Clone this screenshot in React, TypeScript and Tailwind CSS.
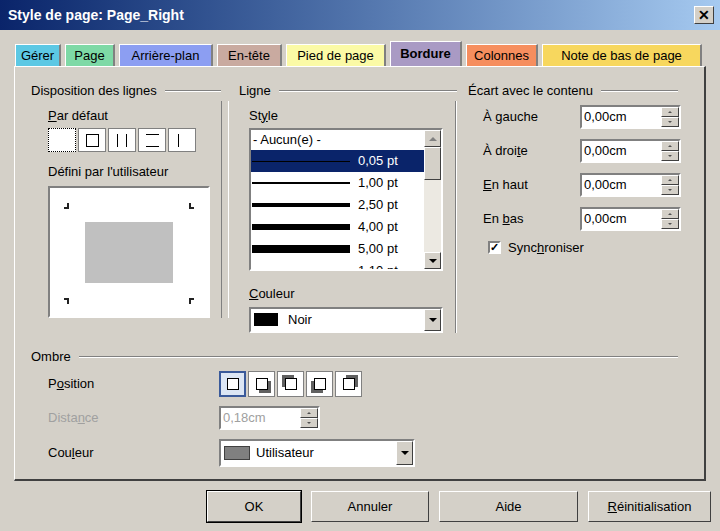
import React from "react";

const sunken = "border-t-[#808080] border-l-[#808080] border-b-white border-r-white border-2";
const raised = "border border-t-white border-l-white border-b-[#404040] border-r-[#404040]";

function Spin({ value, disabled }: { value: string; disabled?: boolean }) {
  return (
    <div className={`flex h-[24px] w-[101px] bg-white ${sunken} ${disabled ? "bg-[#ece9e2]" : ""}`}>
      <div className={`flex-1 pl-[2px] leading-[20px] ${disabled ? "text-[#a0a0a0]" : ""}`}>{value}</div>
      <div className="flex w-[18px] flex-col">
        <div className={`flex flex-1 items-center justify-center bg-[#d4d0c8] ${raised}`}>
          <div className="h-0 w-0 border-x-[2px] border-b-[2px] border-x-transparent border-b-[#505050]" />
        </div>
        <div className={`flex flex-1 items-center justify-center bg-[#d4d0c8] ${raised}`}>
          <div className="h-0 w-0 border-x-[2px] border-t-[2px] border-x-transparent border-t-[#505050]" />
        </div>
      </div>
    </div>
  );
}

function DownBtn() {
  return (
    <div className={`flex w-[17px] items-center justify-center bg-[#d4d0c8] ${raised}`}>
      <div className="h-0 w-0 border-x-[4px] border-t-[4px] border-x-transparent border-t-black" />
    </div>
  );
}

function Group({ title, className }: { title: string; className?: string }) {
  return (
    <div className={`flex items-center gap-2 ${className ?? ""}`}>
      <span>{title}</span>
      <div className="h-0 flex-1 border-t border-t-[#808080] border-b border-b-white" />
    </div>
  );
}

function U({ c }: { c: string }) {
  return <span className="underline">{c}</span>;
}

const tabs = [
  { t: "Gérer", c: "bg-[#5cc8e4]", w: 46 },
  { t: "Page", c: "bg-[#7ed9a6]", w: 50 },
  { t: "Arrière-plan", c: "bg-[#8c9ef2]", w: 94 },
  { t: "En-tête", c: "bg-[#c9aaa0]", w: 65 },
  { t: "Pied de page", c: "bg-[#fbfaa6]", w: 100 },
  { t: "Bordure", c: "bg-[#a99ac4]", w: 72, sel: true },
  { t: "Colonnes", c: "bg-[#f68e5e]", w: 72 },
  { t: "Note de bas de page", c: "bg-[#f7d75e]", w: 160 },
];

export default function App() {
  const presets = ["none", "box", "lr", "tb", "l"];
  const lines = [
    { h: 1, t: "0,05 pt", sel: true },
    { h: 2, t: "1,00 pt" },
    { h: 4, t: "2,50 pt" },
    { h: 6, t: "4,00 pt" },
    { h: 8, t: "5,00 pt" },
  ];
  return (
    <div className="h-[531px] w-[720px] overflow-hidden bg-[#d4d0c8] text-[13px] text-black" style={{ fontFamily: '"Liberation Sans", Arial, sans-serif' }}>
      <div className="flex h-[30px] items-center justify-between bg-gradient-to-r from-[#0a246a] to-[#a6caf0] pl-[8px] pr-[6px]">
        <span className="text-[14px] font-bold text-white">Style de page: Page_Right</span>
        <div className={`flex h-[18px] w-[20px] items-center justify-center bg-[#d4d0c8] ${raised} text-[14px] font-bold leading-none`}>✕</div>
      </div>
      <div className="mt-[13px] flex h-[23px] items-end pl-[15px]">
        {tabs.map((t) => (
          <div key={t.t} style={{ width: t.w }} className={`mr-[4px] flex h-[22px] items-center justify-center ${t.c} ${t.sel ? "h-[25px] font-bold" : ""} border-t border-l border-white border-r-2 border-r-[#808080]`}>
            {t.t}
          </div>
        ))}
      </div>
      <div className={`mx-[14px] h-[415px] border-t border-l border-t-white border-l-white border-r-2 border-b-2 border-r-[#404040] border-b-[#404040] px-[16px] pt-[14px]`}>
        <div className="flex h-[248px]">
          <div className="w-[198px]">
            <Group title="Disposition des lignes" className="pr-[8px]" />
            <div className="border-r border-r-white">
              <div className="ml-[17px] mr-[6px] border-r border-r-[#808080] pt-[5px]">
                <div><U c="P" />ar défaut</div>
                <div className="mt-[3px] flex gap-[2px]">
                  {presets.map((p, i) => (
                    <div key={p} className={`flex h-[24px] w-[28px] items-center justify-center ${i === 0 ? "border border-dotted border-black bg-white" : "border border-[#808080] bg-white"}`}>
                      {p === "box" && <div className="h-[13px] w-[13px] border border-black" />}
                      {p === "lr" && <div className="h-[13px] w-[10px] border-x border-black" />}
                      {p === "tb" && <div className="h-[13px] w-[13px] border-y border-black" />}
                      {p === "l" && <div className="ml-[-8px] h-[13px] w-[1px] bg-black" />}
                    </div>
                  ))}
                </div>
                <div className="mt-[10px]">Défini par l'utilisateur</div>
                <div className={`relative mt-[4px] h-[132px] w-[162px] bg-white ${sunken}`}>
                  <div className="absolute left-[14px] top-[15px] h-[6px] w-[5px] border-b-2 border-r-2 border-[#222]" />
                  <div className="absolute right-[14px] top-[15px] h-[6px] w-[5px] border-b-2 border-l-2 border-[#222]" />
                  <div className="absolute bottom-[12px] left-[14px] h-[6px] w-[5px] border-t-2 border-r-2 border-[#222]" />
                  <div className="absolute bottom-[12px] right-[14px] h-[6px] w-[5px] border-t-2 border-l-2 border-[#222]" />
                  <div className="absolute left-[35px] top-[34px] h-[61px] w-[88px] bg-[#c0c0c0]" />
                </div>
              </div>
            </div>
          </div>
          <div className="w-[236px] pl-[10px]">
            <Group title="Ligne" className="pr-[8px]" />
            <div className="mr-[8px] border-r border-r-white">
              <div className="border-r border-r-[#808080] pl-[10px] pr-[10px] pt-[5px]">
                <div>St<U c="y" />le</div>
                <div className={`mt-[3px] flex h-[143px] w-[194px] bg-white ${sunken}`}>
                  <div className="flex-1 overflow-hidden">
                    <div className="h-[20px] pl-[2px] leading-[20px]">- Aucun(e) -</div>
                    {lines.map((l) => (
                      <div key={l.t} className={`flex h-[22px] items-center ${l.sel ? "bg-[#0a246a] text-white" : ""}`}>
                        <div className="ml-[1px] w-[98px] bg-black" style={{ height: l.h }} />
                        <span className="ml-[8px]">{l.t}</span>
                      </div>
                    ))}
                    <div className="flex h-[22px] items-center">
                      <div className="ml-[1px] h-[2px] w-[98px] bg-black" />
                      <span className="ml-[8px]">1,10 pt</span>
                    </div>
                  </div>
                  <div className="flex w-[17px] flex-col bg-[#ece9e2]">
                    <div className={`flex h-[17px] items-center justify-center bg-[#d4d0c8] ${raised}`}>
                      <div className="h-0 w-0 border-x-[4px] border-b-[4px] border-x-transparent border-b-[#808080]" />
                    </div>
                    <div className={`h-[33px] bg-[#d4d0c8] ${raised}`} />
                    <div className="flex-1" />
                    <div className={`flex h-[17px] items-center justify-center bg-[#d4d0c8] ${raised}`}>
                      <div className="h-0 w-0 border-x-[4px] border-t-[4px] border-x-transparent border-t-black" />
                    </div>
                  </div>
                </div>
                <div className="mt-[13px]"><U c="C" />ouleur</div>
                <div className={`mt-[3px] flex h-[26px] w-[194px] bg-white ${sunken}`}>
                  <div className="flex flex-1 items-center">
                    <div className="ml-[3px] mr-[10px] h-[13px] w-[24px] bg-black" />
                    Noir
                  </div>
                  <DownBtn />
                </div>
              </div>
            </div>
          </div>
          <div className="flex-1 pl-[3px]">
            <Group title="Écart avec le contenu" className="pr-[10px]" />
            <div className="ml-[15px] mt-[4px] flex flex-col gap-[10px]">
              {[
                [<>À <U c="g" />auche</>, "0,00cm"],
                [<>À droi<U c="t" />e</>, "0,00cm"],
                [<><U c="E" />n haut</>, "0,00cm"],
                [<>En <U c="b" />as</>, "0,00cm"],
              ].map((r, i) => (
                <div key={i} className="flex items-center">
                  <div className="w-[97px]">{r[0]}</div>
                  <Spin value={r[1] as string} />
                </div>
              ))}
              <div className="ml-[5px] mt-[-3px] flex items-center gap-[7px]">
                <div className={`flex h-[13px] w-[13px] items-center justify-center bg-white ${sunken} text-[11px] font-bold leading-none`}>✓</div>
                <span>Sync<U c="h" />roniser</span>
              </div>
            </div>
          </div>
        </div>
        <Group title="Ombre" className="mt-[18px] pr-[10px]" />
        <div className="ml-[17px] mt-[2px] flex flex-col">
          <div className="flex h-[30px] items-center">
            <div className="w-[171px]">P<U c="o" />sition</div>
            <div className="flex gap-[2px]">
              {[0, 1, 2, 3, 4].map((i) => (
                <div key={i} className={`flex h-[26px] w-[27px] items-center justify-center ${i === 0 ? "border-2 border-[#3a5a9a] bg-[#dce6f4]" : "border border-[#808080] bg-white"}`}>
                  <div className="relative h-[12px] w-[12px]">
                    {i > 0 && (
                      <div className={`absolute h-[12px] w-[12px] bg-[#606060] ${i === 1 ? "left-[3px] top-[3px]" : i === 2 ? "left-[-3px] top-[-3px]" : i === 3 ? "left-[-3px] top-[3px]" : "left-[3px] top-[-3px]"}`} />
                    )}
                    <div className="absolute inset-0 border border-black bg-white" />
                  </div>
                </div>
              ))}
            </div>
          </div>
          <div className="mt-[6px] flex h-[26px] items-center">
            <div className="w-[171px] text-[#a0a0a0]">Dista<U c="n" />ce</div>
            <Spin value="0,18cm" disabled />
          </div>
          <div className="mt-[8px] flex h-[28px] items-center">
            <div className="w-[171px]">Cou<U c="l" />eur</div>
            <div className={`flex h-[28px] w-[196px] bg-white ${sunken}`}>
              <div className="flex flex-1 items-center">
                <div className="ml-[3px] mr-[6px] h-[14px] w-[26px] border border-[#404040] bg-[#808080]" />
                Utilisateur
              </div>
              <DownBtn />
            </div>
          </div>
        </div>
      </div>
      <div className="mt-[10px] flex gap-[10px] pl-[207px]">
        {[["OK", 94], ["Annuler", 118], ["Aide", 139], ["Réinitialisation", 123]].map(([t, w]) => (
          <div key={t as string} style={{ width: w as number }} className={`flex h-[31px] items-center justify-center bg-[#d4d0c8] ${raised} ${t === "OK" ? "outline outline-1 outline-black" : ""}`}>
            {t === "Réinitialisation" ? <><U c="R" />éinitialisation</> : t}
          </div>
        ))}
      </div>
    </div>
  );
}
